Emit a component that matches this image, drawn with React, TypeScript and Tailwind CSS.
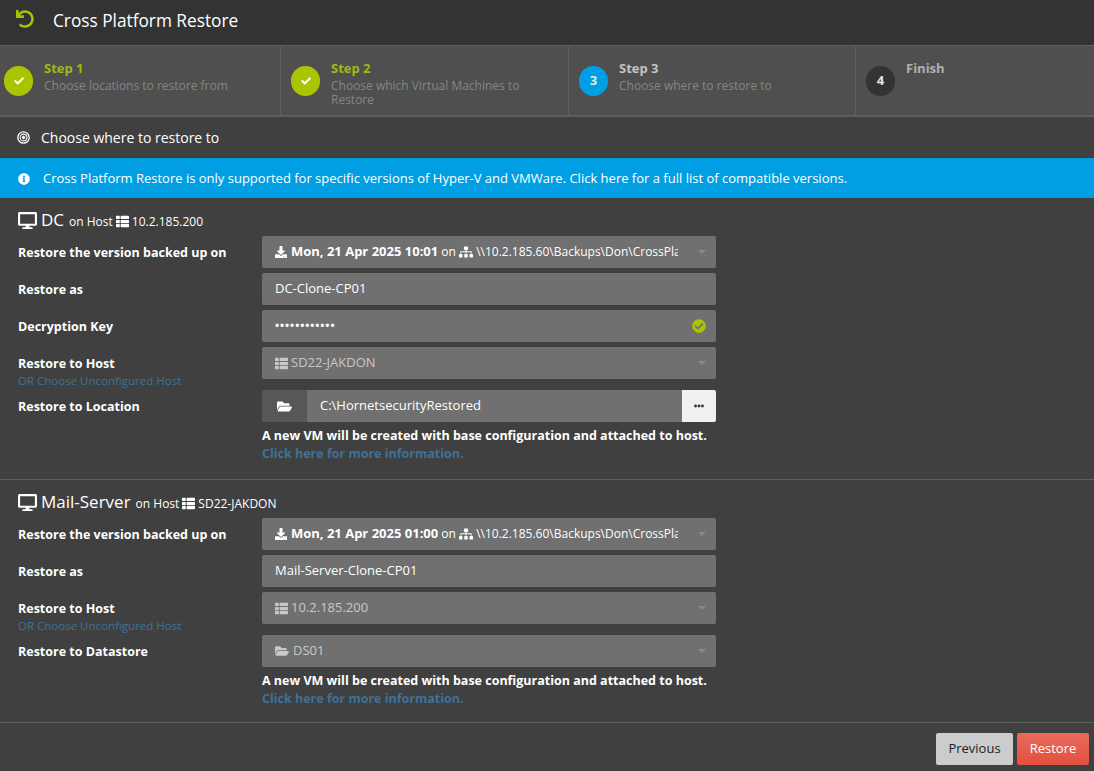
import { FaCheck, FaCheckCircle, FaDesktop, FaDownload, FaEllipsisH, FaFolderOpen, FaInfoCircle, FaSitemap, FaThList, FaUndo } from "react-icons/fa";
import type { ReactNode } from "react";

function Caret() {
  return <span className="ml-auto mr-[10px] h-0 w-0 border-x-[4px] border-t-[4px] border-x-transparent border-t-[#8a8a8a]" />;
}

function Step({ width, circle, title, titleClass, text }: { width: string; circle: ReactNode; title: string; titleClass: string; text?: string }) {
  return (
    <div className={`flex border-r border-[#5e5e5e] last:border-r-0 ${width}`}>
      {circle}
      <div className="pt-[13px] pl-[11px] pr-8">
        <div className={`text-[13px] leading-[18px] font-bold ${titleClass}`}>{title}</div>
        {text && <div className="text-[12px] leading-[14px] mt-[2px] text-[#858585]">{text}</div>}
      </div>
    </div>
  );
}

function Circle({ color, ml, children }: { color: string; ml: string; children: ReactNode }) {
  return (
    <div className={`mt-[20px] w-[29px] h-[30px] shrink-0 rounded-full flex items-center justify-center text-[13px] font-bold text-[#e6e6e6] ${color} ${ml}`}>
      {children}
    </div>
  );
}

function Row({ label, sub, children, className = "" }: { label: string; sub?: boolean; children: ReactNode; className?: string }) {
  return (
    <div className={`flex ${className}`}>
      <div className="w-[244px] shrink-0">
        <div className="h-[32px] pt-[2px] flex items-center text-[12.5px] font-bold text-white">{label}</div>
        {sub && <div className="text-[11.5px] leading-[11px] -mt-[4px] text-[#3d7299]">OR Choose Unconfigured Host</div>}
      </div>
      {children}
    </div>
  );
}

function Field({ children, className = "text-white" }: { children: ReactNode; className?: string }) {
  return <div className={`w-[454px] h-[32px] bg-[#707070] rounded-[2px] flex items-center pl-[13px] text-[13px] ${className}`}>{children}</div>;
}

function VersionField({ time }: { time: string }) {
  return (
    <Field>
      <FaDownload className="text-[12px] mr-[4px] shrink-0" />
      <div className="w-[387px] overflow-hidden whitespace-nowrap shrink-0 text-[12px]">
        <span className="font-bold text-[13px]">Mon, 21 Apr 2025 {time}</span> on{" "}
        <FaSitemap className="inline text-[14px] -mt-[2px]" /> \\10.2.185.60\Backups\Don\CrossPla
      </div>
      <Caret />
    </Field>
  );
}

function Note() {
  return (
    <div className="ml-[244px] mt-[5px] text-[12.5px] leading-[18px] font-bold">
      <div className="text-white">A new VM will be created with base configuration and attached to host.</div>
      <div className="text-[#3d7299]">Click here for more information.</div>
    </div>
  );
}

function VmTitle({ name, host }: { name: string; host: string }) {
  return (
    <div className="flex items-center h-[22px] -mt-[1px] mb-[1px] text-white">
      <FaDesktop className="text-[19px] mr-[4px]" />
      <span className="text-[17px]">{name}</span>
      <span className="text-[12px] ml-[5px] mt-[3px]">on Host</span>
      <FaThList className="text-[13px] mx-[3px] mt-[2px]" />
      <span className="text-[12px] mt-[3px]">{host}</span>
    </div>
  );
}

export default function App() {
  return (
    <div className="w-[1094px] h-[771px] overflow-hidden bg-[#404040] font-['Open_Sans',sans-serif]">
      <header className="h-[45px] bg-[#333333] flex items-center">
        <FaUndo className="ml-[16px] -mt-[7px] text-[18px] text-[#aac500]" />
        <h1 className="ml-[19px] text-[17.25px] text-white -mt-[4px]">Cross Platform Restore</h1>
      </header>
      <div className="h-[72px] flex bg-[#4f4f4f] border-y-2 border-[#5e5e5e] border-t-[1px]">
        <Step width="w-[281px]" title="Step 1" titleClass="text-[#a0ba10]" text="Choose locations to restore from" circle={<Circle color="bg-[#aac500]" ml="ml-[4px]"><FaCheck className="text-[10px] text-white" /></Circle>} />
        <Step width="w-[288px]" title="Step 2" titleClass="text-[#a0ba10]" text="Choose which Virtual Machines to Restore" circle={<Circle color="bg-[#aac500]" ml="ml-[10px]"><FaCheck className="text-[10px] text-white" /></Circle>} />
        <Step width="w-[287px]" title="Step 3" titleClass="text-[#c4c4c4]" text="Choose where to restore to" circle={<Circle color="bg-[#009fe3]" ml="ml-[10px]">3</Circle>} />
        <Step width="flex-1" title="Finish" titleClass="text-[#b0b0b0]" circle={<Circle color="bg-[#333333]" ml="ml-[10px]">4</Circle>} />
      </div>
      <div className="h-[40px] flex items-center pl-[17px] text-[14px] text-white">
        <svg viewBox="0 0 13 13" className="w-[13px] h-[13px] mr-[11px]" fill="none" stroke="white">
          <circle cx="6.5" cy="6.5" r="5.7" strokeWidth="1.3" />
          <circle cx="6.5" cy="6.5" r="3.4" strokeWidth="1.1" />
          <circle cx="6.5" cy="6.5" r="1.4" fill="white" strokeWidth="0.5" />
        </svg>
        Choose where to restore to
      </div>
      <div className="h-[41px] pt-[1px] bg-[#009fe3] border-t border-[#3a3a3a] flex items-center pl-[18px] text-[13px] text-white">
        <FaInfoCircle className="text-[12px] mr-[13px]" />
        Cross Platform Restore is only supported for specific versions of Hyper-V and VMWare. Click here for a full list of compatible versions.
      </div>

      <section className="pl-[18px] pt-[12px] h-[282px] border-b border-[#5e5e5e]">
        <VmTitle name="DC" host="10.2.185.200" />
        <div className="mt-[5px] flex flex-col gap-[5px]">
          <Row label="Restore the version backed up on"><VersionField time="10:01" /></Row>
          <Row label="Restore as"><Field>DC-Clone-CP01</Field></Row>
          <Row label="Decryption Key">
            <Field className="text-white">
              <span className="text-[11px] tracking-[0.9px] font-bold -mt-[2px]">••••••••••••</span>
              <FaCheckCircle className="ml-auto mr-[10px] text-[14px] text-[#aac500]" />
            </Field>
          </Row>
          <Row label="Restore to Host" sub className="h-[38px]">
            <Field className="text-[#c8c8c8]"><FaThList className="text-[13px] mr-[3px]" />SD22-JAKDON<Caret /></Field>
          </Row>
          <Row label="Restore to Location">
            <div className="w-[454px] h-[32px] flex rounded-[2px] overflow-hidden text-[13px] text-white">
              <div className="w-[45px] bg-[#575757] flex items-center justify-center"><FaFolderOpen className="text-[15px]" /></div>
              <div className="flex-1 bg-[#707070] flex items-center pl-[13px]">C:\HornetsecurityRestored</div>
              <div className="w-[34px] bg-[#f0f0f0] flex items-center justify-center text-[#333333]"><FaEllipsisH className="text-[10px]" /></div>
            </div>
          </Row>
        </div>
        <Note />
      </section>

      <section className="pl-[18px] pt-[12px] h-[243px] border-b border-[#5e5e5e]">
        <VmTitle name="Mail-Server" host="SD22-JAKDON" />
        <div className="mt-[5px] flex flex-col gap-[5px]">
          <Row label="Restore the version backed up on"><VersionField time="01:00" /></Row>
          <Row label="Restore as"><Field>Mail-Server-Clone-CP01</Field></Row>
          <Row label="Restore to Host" sub className="h-[38px]">
            <Field className="text-[#c8c8c8]"><FaThList className="text-[13px] mr-[3px]" />10.2.185.200<Caret /></Field>
          </Row>
          <Row label="Restore to Datastore">
            <Field className="text-[#c8c8c8]"><FaFolderOpen className="text-[14px] mr-[4px]" />DS01<Caret /></Field>
          </Row>
        </div>
        <Note />
      </section>

      <footer className="flex justify-end gap-[4px] pt-[10px] pr-[5px]">
        <button className="w-[77px] h-[32px] bg-[#cccccc] rounded-[2px] text-[13px] text-[#222222]">Previous</button>
        <button className="w-[72px] h-[32px] bg-gradient-to-b from-[#e96a5b] to-[#e24f3d] rounded-[2px] text-[13px] text-white">Restore</button>
      </footer>
    </div>
  );
}
